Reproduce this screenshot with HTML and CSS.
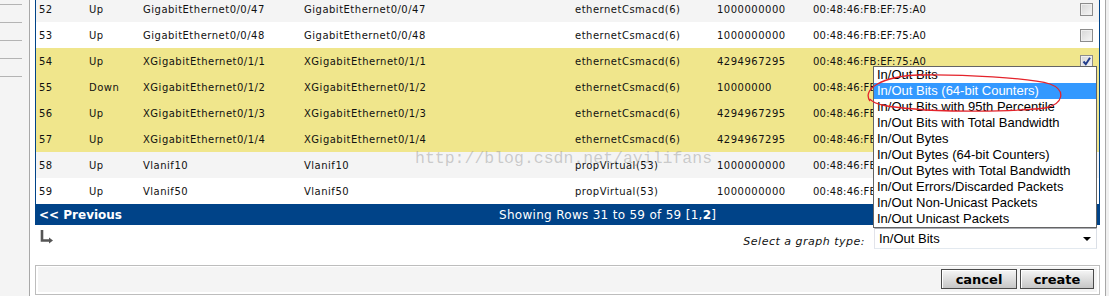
FILE: index.html
```html
<!DOCTYPE html>
<html>
<head>
<meta charset="utf-8">
<link rel="stylesheet" href="styles.css">
</head>
<body>
<div class="page">
  <aside class="side">
    <div class="side-line"></div>
    <div class="side-line"></div>
    <div class="side-line"></div>
    <div class="side-line"></div>
    <div class="side-line"></div>
  </aside>
  <main class="main">
    <table class="grid">
      <colgroup>
        <col class="c1"><col class="c2"><col class="c3"><col class="c4"><col class="c5"><col class="c6"><col class="c7"><col class="c8">
      </colgroup>
      <tr class="odd"><td>52</td><td>Up</td><td>GigabitEthernet0/0/47</td><td>GigabitEthernet0/0/47</td><td>ethernetCsmacd(6)</td><td>1000000000</td><td>00:48:46:FB:EF:75:A0</td><td><span class="cb"></span></td></tr>
      <tr class="even"><td>53</td><td>Up</td><td>GigabitEthernet0/0/48</td><td>GigabitEthernet0/0/48</td><td>ethernetCsmacd(6)</td><td>1000000000</td><td>00:48:46:FB:EF:75:A0</td><td><span class="cb"></span></td></tr>
      <tr class="sel"><td>54</td><td>Up</td><td>XGigabitEthernet0/1/1</td><td>XGigabitEthernet0/1/1</td><td>ethernetCsmacd(6)</td><td>4294967295</td><td>00:48:46:FB:EF:75:A0</td><td><span class="cb"><svg class="tick" viewBox="0 0 11 11" width="11" height="11"><path d="M2.5 5.5 L4.8 8.2 L9 1.8" /></svg></span></td></tr>
      <tr class="sel"><td>55</td><td>Down</td><td>XGigabitEthernet0/1/2</td><td>XGigabitEthernet0/1/2</td><td>ethernetCsmacd(6)</td><td>10000000</td><td>00:48:46:FB:EF:75:A0</td><td><span class="cb"></span></td></tr>
      <tr class="sel"><td>56</td><td>Up</td><td>XGigabitEthernet0/1/3</td><td>XGigabitEthernet0/1/3</td><td>ethernetCsmacd(6)</td><td>4294967295</td><td>00:48:46:FB:EF:75:A0</td><td><span class="cb"></span></td></tr>
      <tr class="sel"><td>57</td><td>Up</td><td>XGigabitEthernet0/1/4</td><td>XGigabitEthernet0/1/4</td><td>ethernetCsmacd(6)</td><td>4294967295</td><td>00:48:46:FB:EF:75:A0</td><td><span class="cb"></span></td></tr>
      <tr class="odd"><td>58</td><td>Up</td><td>Vlanif10</td><td>Vlanif10</td><td>propVirtual(53)</td><td>1000000000</td><td>00:48:46:FB:EF:75:A0</td><td><span class="cb"></span></td></tr>
      <tr class="even"><td>59</td><td>Up</td><td>Vlanif50</td><td>Vlanif50</td><td>propVirtual(53)</td><td>1000000000</td><td>00:48:46:FB:EF:75:A0</td><td><span class="cb"></span></td></tr>
    </table>
    <div class="nav">
      <div class="prev">&lt;&lt; Previous</div>
      <div class="showing">Showing Rows 31 to 59 of 59 [1,<b>2</b>]</div>
      <div></div>
    </div>
    <div class="actions">
      <svg class="return-icon" viewBox="0 0 13 13" width="13" height="13">
        <path d="M1 0 V10.5 H9" />
        <path class="head" d="M8 7.5 L12 10.5 L8 13.5 Z" />
      </svg>
      <span class="label">Select a graph type:</span>
      <div class="select"><span>In/Out Bits</span><span class="arrow"></span></div>
    </div>
    <div class="button-box">
      <div class="button-inner">
        <button class="btn btn-cancel">cancel</button>
        <button class="btn btn-create">create</button>
      </div>
    </div>
  </main>
  <div class="edge"></div>
</div>

<div class="watermark">http://blog.csdn.net/ayilifans</div>

<ul class="dropdown">
  <li>In/Out Bits</li>
  <li class="hl">In/Out Bits (64-bit Counters)</li>
  <li>In/Out Bits with 95th Percentile</li>
  <li>In/Out Bits with Total Bandwidth</li>
  <li>In/Out Bytes</li>
  <li>In/Out Bytes (64-bit Counters)</li>
  <li>In/Out Bytes with Total Bandwidth</li>
  <li>In/Out Errors/Discarded Packets</li>
  <li>In/Out Non-Unicast Packets</li>
  <li>In/Out Unicast Packets</li>
</ul>

<svg class="annotation" viewBox="0 0 1109 296" width="1109" height="296">
  <path d="M870 101 C862 90 880 76 920 75 C960 74 1030 78 1050 84 C1066 90 1064 104 1045 108 C1010 112 940 112 915 109 C890 107 874 105 870 99" />
</svg>
</body>
</html>
```

FILE: styles.css
```css
html, body {
  margin: 0;
  padding: 0;
}
body {
  width: 1109px;
  height: 296px;
  overflow: hidden;
  position: relative;
  background: #fff;
  font-family: "DejaVu Sans", Verdana, sans-serif;
  color: #111;
}
.page {
  display: flex;
  height: 296px;
}
.side {
  width: 29px;
  flex: none;
  padding-top: 4px;
  background: #f4f4f4;
  border-right: 1px solid #a8a8a8;
}
.side-line {
  width: 22px;
  height: 18px;
  box-sizing: border-box;
  border-top: 1px solid #b4b4b4;
}
.main {
  width: 1065px;
  flex: none;
  padding: 0 5px;
  border-right: 1px solid #a8a8a8;
  background: #fff;
}
.edge {
  flex: 1;
  background: #f0f0f0;
}

/* table */
.grid {
  width: 1065px;
  margin-top: -4px;
  border-collapse: separate;
  border-spacing: 0;
  table-layout: fixed;
  border-left: 1px solid #004388;
  border-right: 1px solid #004388;
  font-size: 10px;
  letter-spacing: 0.5px;
}
.c1 { width: 50px; }
.c2 { width: 54px; }
.c3 { width: 161px; }
.c4 { width: 271px; }
.c5 { width: 142px; }
.c6 { width: 96px; }
.c7 { width: 267px; }
.c8 { width: 22px; }
.grid td {
  height: 26px;
  padding: 0 0 0 3px;
  white-space: nowrap;
  overflow: hidden;
  vertical-align: middle;
}
.grid td:nth-child(7) {
  letter-spacing: 0.25px;
}
.odd { background: #f4f4f4; }
.even { background: #fff; }
.sel { background: #f0e68c; }
.cb {
  display: block;
  position: relative;
  width: 13px;
  height: 13px;
  box-sizing: border-box;
  border: 1px solid #8c8c8c;
  background: linear-gradient(135deg, #d6d6d6, #f6f6f6);
  box-shadow: inset 0 0 0 1px #efefef;
}
.tick {
  position: absolute;
  left: 0;
  top: 0;
}
.tick path {
  fill: none;
  stroke: #233d8c;
  stroke-width: 2;
}

/* nav bar */
.nav {
  display: grid;
  grid-template-columns: 464px auto 1fr;
  align-items: center;
  height: 21px;
  background: #004388;
  color: #fff;
  font-size: 12px;
}
.prev {
  padding-left: 4px;
  font-weight: bold;
}
.showing {
  letter-spacing: 0.3px;
}
.showing b { font-weight: bold; }

/* actions row */
.actions {
  display: flex;
  align-items: flex-start;
  height: 40px;
}
.return-icon {
  margin: 5px 0 0 6px;
  overflow: visible;
}
.return-icon path {
  fill: none;
  stroke: #555;
  stroke-width: 2.6;
}
.return-icon .head {
  fill: #555;
  stroke: none;
}
.label {
  margin: 10px 9px 0 auto;
  font-size: 11px;
  letter-spacing: 0.5px;
  font-style: italic;
  color: #111;
}
.select {
  display: flex;
  align-items: center;
  justify-content: space-between;
  box-sizing: border-box;
  width: 223px;
  height: 21px;
  margin: 3px 3px 0 0;
  padding: 0 5px 0 4px;
  border: 1px solid;
  border-color: #abadb3 #dbdfe6 #e3e9ef #e2e3ea;
  background: #fff;
  font-family: "Liberation Sans", Arial, sans-serif;
  font-size: 13px;
  color: #000;
}
.arrow {
  width: 0;
  height: 0;
  border-left: 4px solid transparent;
  border-right: 4px solid transparent;
  border-top: 4px solid #000;
}

/* button box */
.button-box {
  border: 1px solid #bdbdbd;
  padding: 1px 2px 2px 2px;
  background: #fff;
}
.button-inner {
  display: flex;
  justify-content: flex-end;
  gap: 3px;
  height: 25px;
  padding: 2px 3px 0 0;
  box-sizing: border-box;
  background: #f4f4f4;
}
.btn {
  height: 20px;
  padding: 0;
  box-sizing: border-box;
  border: 1px solid #4a4a4a;
  background: linear-gradient(#f6f6f6, #c6c6c6);
  box-shadow: inset 1px 1px 0 #fff;
  font-family: "DejaVu Sans", Verdana, sans-serif;
  font-weight: bold;
  font-size: 13px;
  color: #000;
  line-height: 17px;
}
.btn-cancel { width: 76px; }
.btn-create { width: 74px; }

/* overlays */
.watermark {
  position: absolute;
  left: 415px;
  top: 149px;
  font-family: "Liberation Mono", "Courier New", monospace;
  font-size: 16.5px;
  color: rgba(150, 150, 150, 0.45);
  white-space: nowrap;
}
.dropdown {
  position: absolute;
  left: 873px;
  top: 66px;
  width: 224px;
  margin: 0;
  padding: 0;
  list-style: none;
  box-sizing: border-box;
  border: 1px solid #646464;
  background: #fff;
  font-family: "Liberation Sans", Arial, sans-serif;
  font-size: 13px;
  color: #000;
}
.dropdown li {
  height: 16px;
  line-height: 16px;
  padding-left: 3px;
  white-space: nowrap;
}
.dropdown li.hl {
  background: #3399ff;
  color: #fff;
}
.annotation {
  position: absolute;
  left: 0;
  top: 0;
  pointer-events: none;
}
.annotation path {
  fill: none;
  stroke: #e4232b;
  stroke-width: 1.3;
}
```
